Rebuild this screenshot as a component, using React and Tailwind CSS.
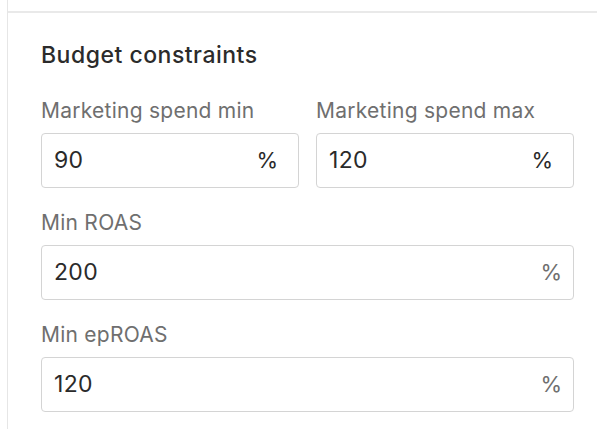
import React from "react";

const font = { fontFamily: "Inter, 'Noto Sans', sans-serif" };

function Field({ label, value, wide }) {
  return (
    <div className="flex flex-col">
      <div className="text-[21px] leading-[28px] text-[#6f6f6f] tracking-[0.25px]">{label}</div>
      <div className="mt-[8px] h-[55px] rounded-[4px] border border-[#d4d4d4] flex items-center justify-between pl-[12px]">
        <span className="text-[23px] text-[#2a2a2a] tracking-[0.3px]">{value}</span>
        <span className={wide ? "text-[22px] text-[#6f6f6f] pr-[11px]" : "text-[22px] text-[#2a2a2a] pr-[20px]"}>%</span>
      </div>
    </div>
  );
}

export default function App() {
  return (
    <div className="w-[597px] h-[429px] bg-white overflow-hidden pl-[7px]" style={font}>
      <div className="h-full border-l border-[#e6e6e6] pt-[11px]">
        <div className="h-full border-t-2 border-[#e9e9e9] pl-[33px] pr-[23px] pt-[27px]">
          <div className="text-[23px] leading-[30px] font-medium text-[#2b2b2b] tracking-[0.5px]">Budget constraints</div>
          <div className="mt-[27px] grid grid-cols-2 gap-x-[17px]">
            <Field label="Marketing spend min" value="90" />
            <Field label="Marketing spend max" value="120" />
          </div>
          <div className="mt-[21px]">
            <Field label="Min ROAS" value="200" wide />
          </div>
          <div className="mt-[21px]">
            <Field label="Min epROAS" value="120" wide />
          </div>
        </div>
      </div>
    </div>
  );
}
